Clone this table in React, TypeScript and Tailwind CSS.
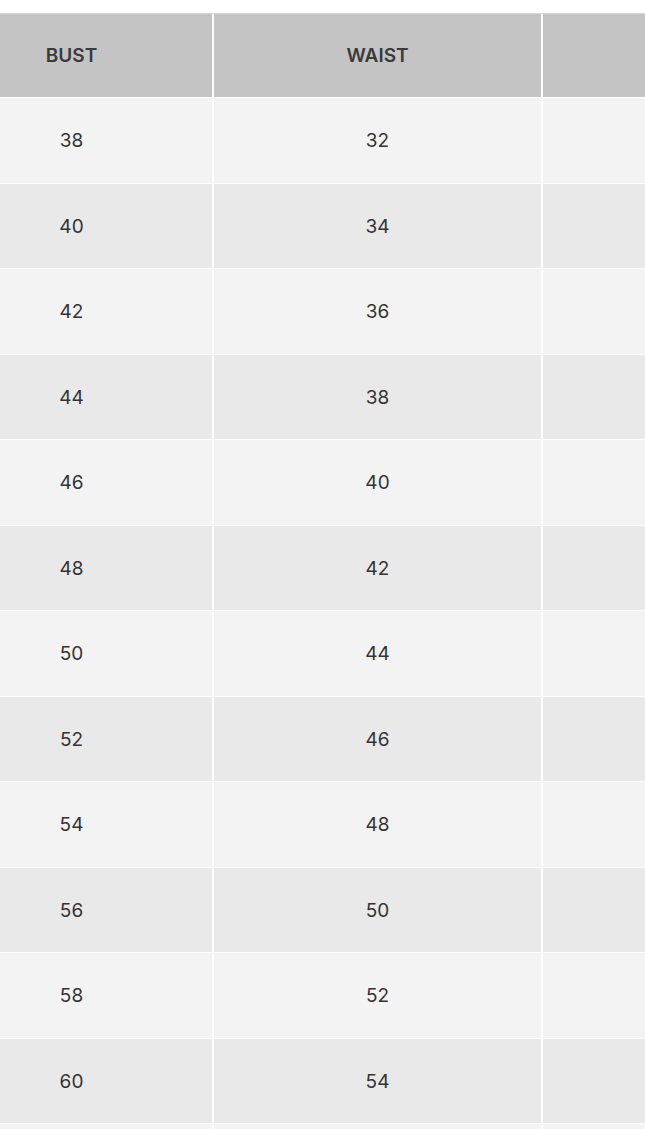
const ROWS: [string, string][] = [
  ["38", "32"],
  ["40", "34"],
  ["42", "36"],
  ["44", "38"],
  ["46", "40"],
  ["48", "42"],
  ["50", "44"],
  ["52", "46"],
  ["54", "48"],
  ["56", "50"],
  ["58", "52"],
  ["60", "54"],
  ["", ""],
];

function Row({ cells, bg }: { cells: string[]; bg: string }) {
  return (
    <div className="flex h-[84.5px] shrink-0 gap-[2px]">
      <div className={`flex w-[281px] shrink-0 items-center justify-center pt-[2px] ${bg}`}>{cells[0]}</div>
      <div className={`flex w-[327px] shrink-0 items-center justify-center pt-[2px] ${bg}`}>{cells[1]}</div>
      <div className={`flex-1 ${bg}`} />
    </div>
  );
}

export default function App() {
  return (
    <div className="h-[1129px] w-full overflow-hidden bg-white pt-[13px] font-['Inter',sans-serif]">
      <div className="ml-[-69px] flex flex-col gap-px text-[19px] text-[#333]">
        <div className="flex h-[84px] shrink-0 gap-[2px] border-t border-[#d4d4d4]">
          <div className="flex w-[281px] shrink-0 items-center justify-center bg-[#c4c4c4] pt-[2px] font-semibold text-[#3a3a3a]">
            BUST
          </div>
          <div className="flex w-[327px] shrink-0 items-center justify-center bg-[#c4c4c4] pt-[2px] font-semibold text-[#3a3a3a]">
            WAIST
          </div>
          <div className="flex-1 bg-[#c4c4c4]" />
        </div>
        {ROWS.map((r, i) => (
          <Row key={i} cells={r} bg={i % 2 === 0 ? "bg-[#f3f3f3]" : "bg-[#e9e9e9]"} />
        ))}
      </div>
    </div>
  );
}
